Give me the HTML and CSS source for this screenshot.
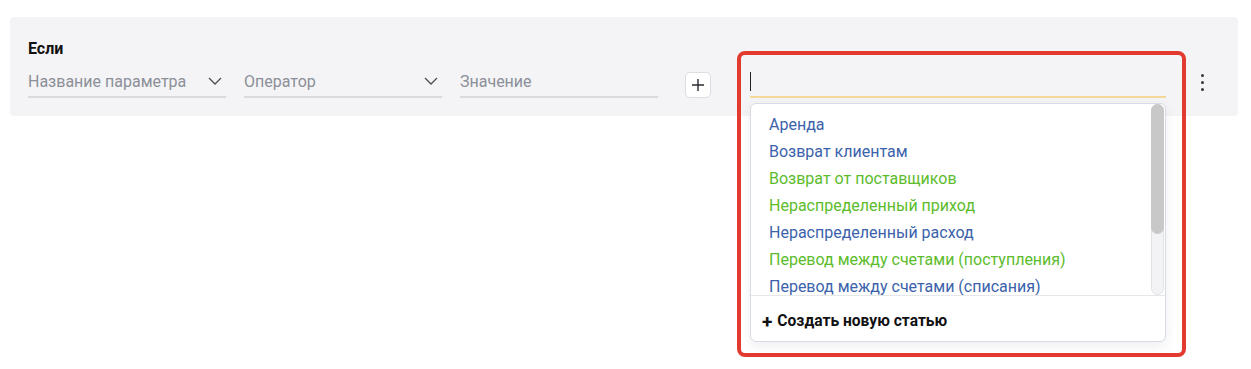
FILE: index.html
```html
<!DOCTYPE html>
<html>
    <head>
        <title>Условие</title>
        <meta charset="UTF-8">
        <link rel="stylesheet" href="styles.css">
    </head>
    <body>
        <div class="rule">
            <div class="rule-label">Если</div>
            <div class="rule-row">
                <div class="field">
                    <span class="placeholder">Название параметра</span>
                    <svg class="chevron" width="14" height="8" viewBox="0 0 14 8"><path d="M1 1l6 6 6-6" fill="none" stroke="#4a4d55" stroke-width="1.3"/></svg>
                </div>
                <div class="field">
                    <span class="placeholder">Оператор</span>
                    <svg class="chevron" width="14" height="8" viewBox="0 0 14 8"><path d="M1 1l6 6 6-6" fill="none" stroke="#4a4d55" stroke-width="1.3"/></svg>
                </div>
                <div class="field">
                    <span class="placeholder">Значение</span>
                </div>
                <button class="add-btn" type="button">
                    <svg width="12" height="12" viewBox="0 0 12 12"><path d="M6 0v12M0 6h12" stroke="#2a2c33" stroke-width="1.4"/></svg>
                </button>

                <!-- Поле выбора статьи с открытым списком -->
                <div class="select-wrap">
                    <div class="field field-active"><span class="caret"></span></div>
                    <div class="highlight">
                        <div class="dropdown">
                            <div class="options-box">
                                <ul class="options">
                                    <li class="blue">Аренда</li>
                                    <li class="blue">Возврат клиентам</li>
                                    <li class="green">Возврат от поставщиков</li>
                                    <li class="green">Нераспределенный приход</li>
                                    <li class="blue">Нераспределенный расход</li>
                                    <li class="green">Перевод между счетами (поступления)</li>
                                    <li class="blue">Перевод между счетами (списания)</li>
                                </ul>
                                <div class="scrollbar"><div class="scroll-thumb"></div></div>
                            </div>
                            <div class="create">
                                <span class="create-plus">+</span> Создать новую статью
                            </div>
                        </div>
                    </div>
                </div>

                <div class="kebab">
                    <span></span><span></span><span></span>
                </div>
            </div>
        </div>
    </body>
</html>
```

FILE: styles.css
```css
html, body {
    margin: 0;
}

body {
    box-sizing: border-box;
    min-height: 369px;
    padding: 17px 13px 0 10px;
    font-family: Roboto, "Liberation Sans", sans-serif;
    background: #fff;
}

.rule {
    background: #f4f4f6;
    border-radius: 4px;
    padding: 22px 18px 18px 18px;
    height: 59px;
}

.rule-label {
    font-size: 16px;
    font-weight: 700;
    color: #111;
    line-height: 20px;
    margin-bottom: 7px;
}

.rule-row {
    display: flex;
    align-items: flex-start;
}

.field {
    width: 198px;
    height: 30px;
    border-bottom: 2px solid #d9dadd;
    display: flex;
    align-items: center;
    justify-content: space-between;
    margin-right: 18px;
    box-sizing: content-box;
}

.placeholder {
    font-size: 16px;
    color: #8b8f98;
}

.chevron {
    margin-right: 4px;
}

.add-btn {
    width: 26px;
    height: 26px;
    margin: 6px 0 0 9px;
    padding: 0;
    background: #fff;
    border: 1px solid #dcdde2;
    border-radius: 5px;
    display: flex;
    align-items: center;
    justify-content: center;
}

.select-wrap {
    position: relative;
    margin-left: 39px;
    width: 416px;
}

.field-active {
    width: 416px;
    margin: 0;
    border-bottom-color: #f5d898;
    justify-content: flex-start;
}

.caret {
    width: 1px;
    height: 19px;
    background: #222;
    margin-top: 1px;
}

/* красная рамка поверх поля и выпадающего списка */
.highlight {
    position: absolute;
    left: -13px;
    top: -15px;
    width: 441px;
    height: 298px;
    border: 4px solid #e33a30;
    border-radius: 8px;
    pointer-events: none;
}

.dropdown {
    position: absolute;
    left: 9px;
    top: 48px;
    width: 414px;
    background: #fff;
    border: 1px solid #d8dbe3;
    border-radius: 6px;
    box-shadow: 0 4px 12px rgba(30, 40, 70, 0.08);
}

.options-box {
    display: flex;
    height: 191px;
}

.options {
    flex: 1;
    list-style: none;
    margin: 0;
    padding: 7px 0 0 0;
    overflow: hidden;
}

.options li {
    font-size: 16px;
    line-height: 27px;
    padding-left: 18px;
}

.scrollbar {
    width: 13px;
    margin-right: 1px;
    background: #f3f3f5;
    border: 1px solid #e1e2e7;
    border-radius: 7px;
    box-sizing: border-box;
}

.scroll-thumb {
    height: 130px;
    margin: -1px;
    background: #c8c8c9;
    border-radius: 7px;
}

.blue {
    color: #3b62ab;
}

.green {
    color: #5cbc2c;
}

.create {
    border-top: 1px solid #e6e7eb;
    height: 46px;
    display: flex;
    align-items: center;
    padding: 5px 0 0 11px;
    box-sizing: border-box;
    font-size: 15.6px;
    font-weight: 700;
    color: #111;
}

.create-plus {
    font-size: 19px;
    margin-right: 5px;
    line-height: 1;
}

.kebab {
    margin-left: 35px;
    padding-top: 8px;
    display: flex;
    flex-direction: column;
    gap: 4px;
}

.kebab span {
    width: 3px;
    height: 3px;
    border-radius: 50%;
    background: #33363d;
}
```
